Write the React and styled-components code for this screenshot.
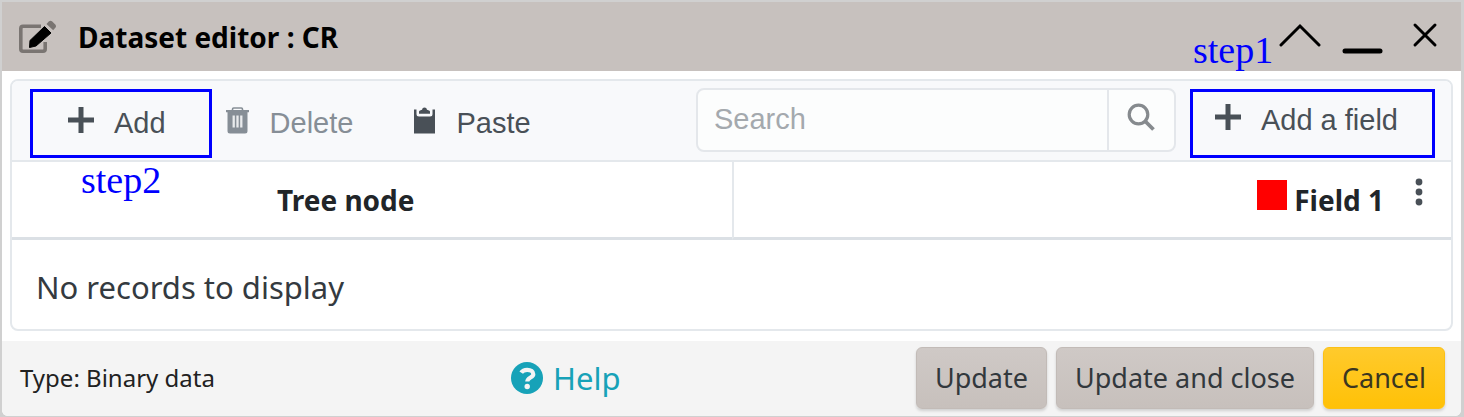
import React from "react";
import styled, { createGlobalStyle } from "styled-components";

const GlobalStyle = createGlobalStyle`
      * {
            box-sizing: border-box;
      }

      body {
            margin: 0;
            background: #d0d0d0;
            font-family: "Noto Sans", "Open Sans", sans-serif;
            color: #212529;
      }

      button {
            border: none;
            background: none;
            padding: 0;
            font: inherit;
            color: inherit;
            cursor: pointer;
      }

      svg {
            display: block;
            flex: none;
      }
`;

const Window = styled.main`
      margin: 2px 3px 3px 2px;
      background: #ffffff;
      border-radius: 0 0 6px 6px;
      overflow: hidden;
`;

const TitleBar = styled.header`
      display: flex;
      align-items: center;
      height: 69px;
      padding: 0 15px 0 16px;
      background: #c7c1be;
      color: #000000;
`;

const Title = styled.h1`
      flex: 1;
      margin: 0 0 0 21px;
      font-size: 28px;
      line-height: 36px;
      font-weight: 700;
`;

const WindowControls = styled.div`
      display: flex;
      align-items: center;
      gap: 21px;
`;

const Panel = styled.section`
      margin: 8px 8px 10px;
      border: 2px solid #e4e8ec;
      border-radius: 8px;
`;

const Toolbar = styled.div`
      display: flex;
      align-items: flex-start;
      padding: 8px 16px 2px 18px;
      background: #f8f9fb;
      border-bottom: 2px solid #e4e8ec;
      border-radius: 6px 6px 0 0;
      font-family: "Liberation Sans", Arial, sans-serif;
      font-size: 29px;
      line-height: 32px;
      color: #495057;
`;

const Callout = styled.div`
      position: relative;
      flex: none;
      border: 3px solid #0000ff;
`;

const StepLabel = styled.span`
      position: absolute;
      top: ${(props) => (props.$above ? "-64px" : "66px")};
      left: ${(props) => (props.$above ? "0" : "48px")};
      font-family: "Liberation Serif", "Times New Roman", serif;
      font-size: 38px;
      line-height: 44px;
      color: #0000ff;
      pointer-events: none;
`;

const ToolButton = styled.button`
      display: flex;
      align-items: center;
      gap: ${(props) => props.$gap || "20px"};
      height: 63px;
      padding: ${(props) => props.$pad || "0 0 2px"};
      white-space: nowrap;

      &:disabled {
            color: #868e96;
            cursor: default;
      }

      svg {
            margin-bottom: 5px;
      }
`;

const EditActions = styled.div`
      display: flex;
      flex: 1;
      gap: 60px;
      padding: 3px 13px;
`;

const SearchBox = styled.form`
      display: flex;
      flex: 0 1 480px;
      height: 64px;
      margin: -1px 14px 0 0;
      background: #fcfdfd;
      border: 2px solid #e4e7eb;
      border-radius: 8px;
`;

const SearchInput = styled.input`
      flex: 1;
      min-width: 0;
      padding: 0 16px 2px;
      border: none;
      outline: none;
      background: transparent;
      font: inherit;
      color: inherit;

      &::placeholder {
            color: #a4a9ae;
            opacity: 1;
      }
`;

const SearchButton = styled.button`
      display: flex;
      justify-content: center;
      padding-top: 13px;
      width: 67px;
      border-left: 2px solid #e4e7eb;
`;

const Records = styled.table`
      width: 100%;
      table-layout: fixed;
      border-collapse: separate;
      border-spacing: 0;
`;

const HeadCell = styled.th`
      height: 78px;
      padding: 0 52px 0 0;
      border-bottom: 3px solid #dbe0e5;
      font-size: 28px;
      line-height: 36px;
      font-weight: 700;

      & + & {
            padding: 0 24px 0 0;
            border-left: 2px solid #e4e8ec;
      }
`;

const FieldHead = styled.div`
      display: flex;
      align-items: center;
      justify-content: flex-end;
      gap: 7px;
`;

const Swatch = styled.span`
      width: 30px;
      height: 30px;
      margin-bottom: 9px;
      background: #ff0000;
`;

const MenuButton = styled.button`
      margin: 0 0 15px 20px;
      color: #495057;
`;

const EmptyCell = styled.td`
      height: 89px;
      padding: 5px 24px 0 24px;
      font-size: 31px;
      line-height: 42px;
      color: #343a40;
`;

const Footer = styled.footer`
      display: grid;
      grid-template-columns: 491px 1fr auto;
      align-items: center;
      padding: 6px 16px 7px 18px;
      background: #f4f4f4;
`;

const TypeText = styled.span`
      font-size: 24px;
      line-height: 36px;
      color: #212121;
`;

const HelpLink = styled.a`
      display: flex;
      align-items: center;
      gap: 10px;
      justify-self: start;
      font-size: 31px;
      line-height: 42px;
      color: #17a2b8;
      text-decoration: none;
`;

const Actions = styled.div`
      display: flex;
      gap: 9px;
`;

const ActionButton = styled.button`
      && {
            height: 62px;
            padding: 0 18px 0;
            border: 1px solid ${(props) => (props.$warning ? "#fbc016" : "#c2bbb7")};
            border-radius: 6px;
            background: ${(props) =>
                  props.$warning
                        ? "linear-gradient(#ffca2c, #ffc107)"
                        : "linear-gradient(#cfc9c6, #c7c0bc)"};
            box-shadow: 0 2px 3px rgba(0, 0, 0, 0.15);
            font-size: 27px;
            line-height: 36px;
            color: ${(props) => (props.$warning ? "#3b3620" : "#32383d")};
            white-space: nowrap;
      }
`;

function EditIcon() {
      return (
            <svg width="39" height="34" viewBox="0 0 39 34" fill="none">
                  <path
                        d="M23 6.200H5Q2.800 6.200 2.800 8.400V29Q2.800 31.200 5 31.200H25Q27.200 31.200 27.200 29V22"
                        stroke="#7a7572"
                        strokeWidth="3.600"
                  />
                  <path d="M26.500 6.500L33 13L18 26L11.500 27.500L12 20.500Z" fill="#000000" stroke="#000000" strokeLinejoin="round" />
                  <path d="M28.500 4L31 1.300Q32.500 0 34 1.300L37.500 4.800Q38.700 6.200 37.500 7.600L35.200 10.200Z" fill="#7a7572" />
            </svg>
      );
}

function PlusIcon() {
      return (
            <svg width="26" height="26" viewBox="0 0 26 26" fill="currentColor">
                  <path d="M10.500 0H15.500V10.500H26V15.500H15.500V26H10.500V15.500H0V10.500H10.500Z" />
            </svg>
      );
}

function TrashIcon() {
      return (
            <svg width="25" height="27" viewBox="0 0 25 27" fill="none">
                  <path d="M7.500 3.500V2.200Q7.500 1 8.700 1H16.300Q17.500 1 17.500 2.200V3.500" stroke="currentColor" strokeWidth="1.600" />
                  <path d="M1 3H24V5.200H22.500V24Q22.500 26.500 20 26.500H5Q2.500 26.500 2.500 24V5.200H1Z" fill="currentColor" />
                  <path d="M8.700 8.500V20.500M12.500 8.500V20.500M16.300 8.500V20.500" stroke="#e9ebed" strokeWidth="2.300" />
            </svg>
      );
}

function ClipboardIcon() {
      return (
            <svg width="23" height="27" viewBox="0 0 23 27" fill="currentColor">
                  <path d="M1 2.500H3.500V7Q3.500 9.500 6 9.500H17Q19.500 9.500 19.500 7V2.500H22V26.500H1Z" />
                  <path d="M6 6.800V4.800Q6 3.800 7 3.500L9 2.700Q9.300 .5 11.500 .5T14 2.700L16 3.500Q17 3.800 17 4.800V6.800Z" />
            </svg>
      );
}

function SearchIcon() {
      return (
            <svg width="28" height="28" viewBox="0 0 28 28" fill="none" stroke="#868a8e">
                  <circle cx="11.500" cy="11.500" r="9.300" strokeWidth="3.200" />
                  <path d="M18 18L26.500 26.500" strokeWidth="3.800" />
            </svg>
      );
}

function HelpIcon() {
      return (
            <svg width="32" height="32" viewBox="0 0 32 32" fill="none">
                  <circle cx="16" cy="16" r="16" fill="#17a2b8" />
                  <path
                        d="M10.200 10.700Q12 7.800 16.200 7.800C19.900 7.800 22.300 9.500 22.300 12.200C22.300 15.700 16.300 15.300 16.300 19.500"
                        stroke="#f4f4f4"
                        strokeWidth="4.200"
                  />
                  <circle cx="16.200" cy="24.500" r="2.700" fill="#f4f4f4" />
            </svg>
      );
}

function App() {
      return (
            <>
                  <GlobalStyle />
                  <Window>
                        <TitleBar>
                              <EditIcon />
                              <Title>Dataset editor : CR</Title>
                              <WindowControls>
                                    <button type="button" aria-label="Collapse">
                                          <svg width="42" height="34" viewBox="0 0 42 34" fill="none" stroke="#000000" strokeWidth="3" strokeLinecap="round">
                                                <path d="M2 25L21 6L40 25" />
                                          </svg>
                                    </button>
                                    <button type="button" aria-label="Minimize">
                                          <svg width="41" height="35" viewBox="0 0 41 35" fill="none" stroke="#000000" strokeWidth="5" strokeLinecap="round">
                                                <path d="M3 32H38" />
                                          </svg>
                                    </button>
                                    <button type="button" aria-label="Close">
                                          <svg width="42" height="34" viewBox="0 0 42 34" fill="none" stroke="#000000" strokeWidth="3" strokeLinecap="round">
                                                <path d="M11 5L31 25M31 5L11 25" />
                                          </svg>
                                    </button>
                              </WindowControls>
                        </TitleBar>
                        <Panel>
                              <Toolbar>
                                    <Callout>
                                          <ToolButton type="button" $pad="0 43px 2px 35px">
                                                <PlusIcon />
                                                Add
                                          </ToolButton>
                                          <StepLabel>step2</StepLabel>
                                    </Callout>
                                    <EditActions>
                                          <ToolButton type="button" disabled>
                                                <TrashIcon />
                                                Delete
                                          </ToolButton>
                                          <ToolButton type="button">
                                                <ClipboardIcon />
                                                Paste
                                          </ToolButton>
                                    </EditActions>
                                    <SearchBox role="search" onSubmit={(e) => e.preventDefault()}>
                                          <SearchInput type="text" placeholder="Search" aria-label="Search" />
                                          <SearchButton type="submit" aria-label="Search">
                                                <SearchIcon />
                                          </SearchButton>
                                    </SearchBox>
                                    <Callout>
                                          <ToolButton type="button" $pad="0 34px 8px 22px">
                                                <PlusIcon />
                                                Add a field
                                          </ToolButton>
                                          <StepLabel $above>step1</StepLabel>
                                    </Callout>
                              </Toolbar>
                              <Records>
                                    <thead>
                                          <tr>
                                                <HeadCell scope="col">Tree node</HeadCell>
                                                <HeadCell scope="col">
                                                      <FieldHead>
                                                            <Swatch />
                                                            Field 1
                                                            <MenuButton type="button" aria-label="Field menu">
                                                                  <svg width="16" height="28" viewBox="0 0 16 28" fill="currentColor">
                                                                        <circle cx="8" cy="4" r="3.400" />
                                                                        <circle cx="8" cy="14" r="3.400" />
                                                                        <circle cx="8" cy="24" r="3.400" />
                                                                  </svg>
                                                            </MenuButton>
                                                      </FieldHead>
                                                </HeadCell>
                                          </tr>
                                    </thead>
                                    <tbody>
                                          <tr>
                                                <EmptyCell colSpan={2}>No records to display</EmptyCell>
                                          </tr>
                                    </tbody>
                              </Records>
                        </Panel>
                        <Footer>
                              <TypeText>Type: Binary data</TypeText>
                              <HelpLink href="#help">
                                    <HelpIcon />
                                    Help
                              </HelpLink>
                              <Actions>
                                    <ActionButton type="button">Update</ActionButton>
                                    <ActionButton type="button">Update and close</ActionButton>
                                    <ActionButton type="button" $warning>
                                          Cancel
                                    </ActionButton>
                              </Actions>
                        </Footer>
                  </Window>
            </>
      );
}

export default App;
